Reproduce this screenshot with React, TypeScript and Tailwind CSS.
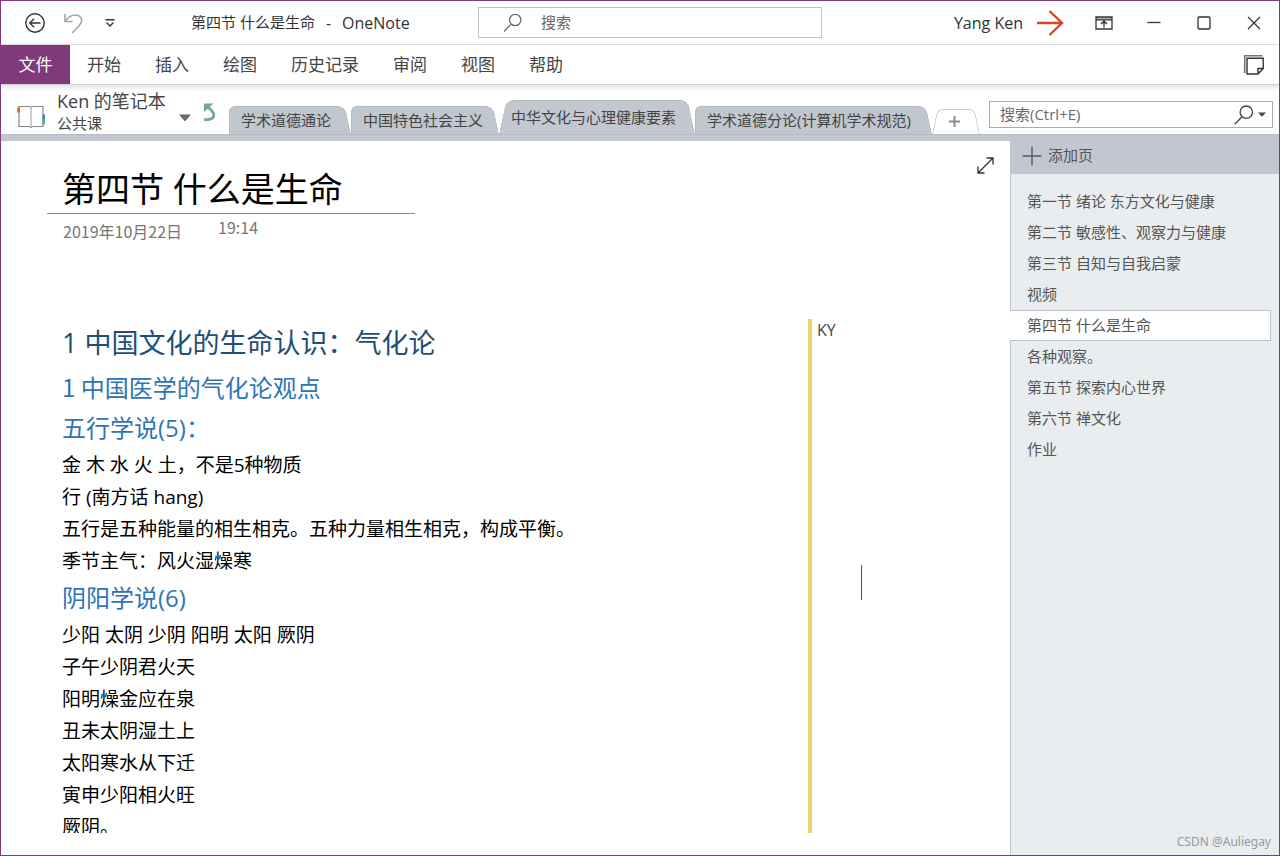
import React from "react";

const menus = ["开始", "插入", "绘图", "历史记录", "审阅", "视图", "帮助"];

const pages = [
  "第一节 绪论 东方文化与健康",
  "第二节 敏感性、观察力与健康",
  "第三节 自知与自我启蒙",
  "视频",
  "第四节 什么是生命",
  "各种观察。",
  "第五节 探索内心世界",
  "第六节 禅文化",
  "作业",
];

const currentPage = "第四节 什么是生命";

function TitleBar() {
  return (
    <header className="flex h-11 shrink-0 items-center border-b border-[#e1e1e1]">
      <div className="flex w-[477px] shrink-0 items-center">
        <button aria-label="返回" className="ml-[23px] flex h-8 w-[22px] items-center justify-center">
          <svg width="22" height="22" viewBox="0 0 22 22" fill="none" stroke="#333" strokeWidth="1.4">
            <circle cx="11" cy="11" r="9.2" />
            <path d="M5.8 11H16.5M10 6.7L5.8 11L10 15.3" />
          </svg>
        </button>
        <button aria-label="撤消" className="ml-4 flex h-8 w-[22px] items-center justify-center">
          <svg width="22" height="22" viewBox="0 0 22 22" fill="none" stroke="#a3a3a3" strokeWidth="1.5">
            <path d="M3 2V9.5H10.5" />
            <path d="M3.3 9.2C6 5.2 9.5 2.8 13.5 2.9C17.5 3 20 5.8 19.6 9.2C19.2 13 14 17 10 21" />
          </svg>
        </button>
        <button aria-label="自定义快速访问工具栏" className="ml-5 flex h-8 w-3 items-center justify-center">
          <svg width="12" height="12" viewBox="0 0 12 12" fill="none" stroke="#333" strokeWidth="1.4">
            <path d="M1.5 2.7H10.5M2.5 5.5L6 9L9.5 5.5" />
          </svg>
        </button>
        <div className="ml-[75px] flex items-center gap-[11px] whitespace-pre text-[#333]">
          <span className="text-[15px]">第四节 什么是生命</span>
          <span>-</span>
          <span>OneNote</span>
        </div>
      </div>
      <label className="flex h-[31px] w-[344px] items-center border border-[#c4c4c4]">
        <svg className="ml-6 shrink-0" width="20" height="20" viewBox="0 0 20 20" fill="none" stroke="#666" strokeWidth="1.2">
          <circle cx="12.2" cy="7" r="5.7" />
          <path d="M8.2 11.2L1 18.5" />
        </svg>
        <input
          type="text"
          aria-label="搜索"
          placeholder="搜索"
          className="ml-[18px] min-w-0 flex-1 text-[15px] outline-none placeholder:text-[#666]"
        />
      </label>
      <div className="ml-auto flex items-center">
        <span className="text-[#333]">Yang Ken</span>
        <svg className="mr-3.5 ml-3.5" width="28" height="26" viewBox="0 0 28 26" fill="none" stroke="#d24726" strokeWidth="2.4">
          <path d="M0 13H26M12.5 1L25 13L12.5 25" />
        </svg>
        <button aria-label="功能区显示选项" className="flex h-10 w-[50px] items-center justify-center">
          <svg width="18" height="14" viewBox="0 0 18 14" fill="none" stroke="#333" strokeWidth="1.3">
            <path d="M1 2.5H17" stroke="#aaa" strokeWidth="2" />
            <path d="M1 1H17V13H1ZM1 3.8H17M9 11.5V5.5M6 8L9 5.2L12 8" />
          </svg>
        </button>
        <button aria-label="最小化" className="flex h-10 w-[50px] items-center justify-center">
          <svg width="14" height="14" viewBox="0 0 14 14" fill="none" stroke="#333" strokeWidth="1.3">
            <path d="M0.5 6.5H13.5" />
          </svg>
        </button>
        <button aria-label="最大化" className="flex h-10 w-[50px] items-center justify-center">
          <svg width="14" height="14" viewBox="0 0 14 14" fill="none" stroke="#333" strokeWidth="1.3">
            <rect x="1" y="1" width="12" height="12" rx="1.2" />
          </svg>
        </button>
        <button aria-label="关闭" className="flex h-10 w-[50px] items-center justify-center">
          <svg width="14" height="14" viewBox="0 0 14 14" fill="none" stroke="#333" strokeWidth="1.3">
            <path d="M1 1L13 13M13 1L1 13" />
          </svg>
        </button>
      </div>
    </header>
  );
}

function Ribbon() {
  return (
    <nav className="z-10 flex h-10 shrink-0 items-center border-b border-[#d2d2d2] bg-white text-[17px] text-[#444] shadow-[0_2px_5px_rgba(0,0,0,0.14)]">
      <button className="h-full w-[69px] bg-[#80397b] text-white">文件</button>
      <div className="ml-[17px] flex gap-[34px]">
        {menus.map((m) => (
          <button key={m}>{m}</button>
        ))}
      </div>
      <button aria-label="便笺" className="mr-3.5 ml-auto">
        <svg width="22" height="22" viewBox="0 0 22 22" fill="none">
          <path d="M1.7 19V1.7H19.5" stroke="#777" strokeWidth="1.6" />
          <path d="M4 4.2H20.2V14.5L15 20H4Z" stroke="#333" strokeWidth="1.4" />
          <path d="M20.2 14.5H15V20" stroke="#333" strokeWidth="1.4" />
        </svg>
      </button>
    </nav>
  );
}

function SectionTab({ label, width }: { label: string; width: string }) {
  return (
    <button className={`relative isolate h-7 pr-4 pl-3 text-left whitespace-nowrap ${width}`}>
      <span className="absolute inset-y-0 right-4 left-0 -z-10 rounded-tl-md border-t border-l border-[#b3bac2] bg-[#c1c7ce]" />
      <span className="absolute inset-y-0 right-0 left-4 -z-10 origin-bottom skew-x-12 rounded-tr-lg border-t border-r border-[#b3bac2] bg-[#c1c7ce]" />
      {label}
    </button>
  );
}

function ActiveTab({ label }: { label: string }) {
  return (
    <button className="relative isolate z-10 h-[34px] min-w-[196px] px-3 text-left whitespace-nowrap">
      <span className="absolute inset-y-0 right-6 left-0 -z-10 origin-bottom -skew-x-12 rounded-tl-lg border-t border-l border-[#b3bac2] bg-[#c3c8d0]" />
      <span className="absolute inset-y-0 right-0 left-6 -z-10 origin-bottom skew-x-12 rounded-tr-lg border-t border-r border-[#b3bac2] bg-[#c3c8d0]" />
      {label}
    </button>
  );
}

function SectionBar() {
  return (
    <div className="flex h-[49px] shrink-0 text-[15px] text-[#444]">
      <div className="flex w-[228px] shrink-0">
        <svg className="mt-5 ml-4 shrink-0" width="28" height="24" viewBox="0 0 28 24" fill="none">
          <path d="M2 1.5H12L14 2.2L16 1.5H26V21.5H16L14 22.3L12 21.5H2Z" stroke="#888" strokeWidth="1.2" />
          <path d="M14 2.5V22" stroke="#bbb" strokeWidth="1.4" />
          <path d="M1.6 2.5V7.5" stroke="#e8562f" strokeWidth="2.6" />
          <path d="M26.8 9.5V14.5" stroke="#3c7fc4" strokeWidth="2.4" />
          <path d="M26.8 14.5V19.5" stroke="#58a88c" strokeWidth="2.4" />
        </svg>
        <div className="mt-1 ml-3 w-[114px] shrink-0 whitespace-nowrap">
          <div className="text-[18px] leading-6">Ken 的笔记本</div>
          <div className="leading-5">公共课</div>
        </div>
        <button aria-label="选择笔记本" className="mt-[29px] ml-2 h-2 w-3">
          <svg width="12" height="8" viewBox="0 0 12 8">
            <path d="M0 0.5H12L6 7.5Z" fill="#6a6a6a" />
          </svg>
        </button>
        <button aria-label="同步" className="mt-[18px] ml-3 h-5 w-3.5">
          <svg width="14" height="20" viewBox="0 0 14 20" fill="none">
            <path d="M1 0.5H10.5L7.5 3.2L4 6.5L1 9Z" fill="#72a995" />
            <path d="M4 3.5C6.5 6 10.8 8 10.8 12C10.8 15.2 7.5 17.2 1.2 16.4" stroke="#72a995" strokeWidth="2.8" />
          </svg>
        </button>
      </div>
      <div className="flex flex-1 items-end">
        <SectionTab label="学术道德通论" width="min-w-[122px]" />
        <SectionTab label="中国特色社会主义" width="min-w-[147px]" />
        <ActiveTab label="中华文化与心理健康要素" />
        <SectionTab label="学术道德分论(计算机学术规范)" width="min-w-[237px]" />
        <button aria-label="新建分区" className="relative isolate flex h-[25px] w-12 items-center justify-center">
          <span className="absolute inset-y-0 right-4 left-0 -z-10 origin-bottom -skew-x-12 rounded-tl-md border-t border-l border-[#c6c6c6] bg-white" />
          <span className="absolute inset-y-0 right-0 left-4 -z-10 origin-bottom skew-x-12 rounded-tr-md border-t border-r border-[#c6c6c6] bg-white" />
          <svg className="mr-1" width="11" height="11" viewBox="0 0 11 11" stroke="#8c8c8c" strokeWidth="2">
            <path d="M5.5 0V11M0 5.5H11" />
          </svg>
        </button>
      </div>
      <div className="mt-4 mr-1.5 flex h-[27px] w-[284px] shrink-0 items-center border border-[#ababab]">
        <input
          type="text"
          aria-label="搜索(Ctrl+E)"
          placeholder="搜索(Ctrl+E)"
          className="ml-2.5 min-w-0 flex-1 outline-none placeholder:text-[#6a6a6a]"
        />
        <button aria-label="搜索" className="flex">
          <svg width="20" height="20" viewBox="0 0 20 20" fill="none" stroke="#444" strokeWidth="1.3">
            <circle cx="12.3" cy="7.2" r="6.2" />
            <path d="M8 11.8L0.8 19.2" />
          </svg>
        </button>
        <button aria-label="搜索范围" className="mr-1.5 ml-1">
          <svg width="8" height="5" viewBox="0 0 8 5">
            <path d="M0 0.5H8L4 4.8Z" fill="#444" />
          </svg>
        </button>
      </div>
    </div>
  );
}

const H3 = ({ children }: { children: React.ReactNode }) => (
  <h4 className="text-2xl leading-[42px] text-[#2e75b5]">{children}</h4>
);

function Note() {
  return (
    <main className="relative flex min-w-0 flex-1 flex-col bg-white text-black">
      <button aria-label="整页视图" className="absolute top-4 right-4">
        <svg width="17" height="17" viewBox="0 0 17 17" fill="none" stroke="#333" strokeWidth="1.3">
          <path d="M1.5 15.5L15.5 1.5M9.5 1H16V7.5M1 9.5V16H7.5" />
        </svg>
      </button>
      <div className="mt-6 ml-[46px] flex">
        <h1 className="min-w-[368px] border-b border-[#8a8a8a] pl-[15px] text-[34px] leading-[48px]">第四节 什么是生命</h1>
      </div>
      <div className="ml-[62px] flex h-[105px] items-start gap-9 font-['Noto_Sans_CJK_SC',sans-serif] text-[#767676]">
        <span className="leading-[34px]">2019年10月22日</span>
        <span className="leading-[26px]">19:14</span>
      </div>
      <div className="mb-[22px] flex min-h-0 flex-1 overflow-hidden pl-[61px]">
        <article className="w-[746px] shrink-0 text-[19px] leading-8">
          <h2 className="text-[27px] leading-[48px] text-[#1e4e79]">1 中国文化的生命认识：气化论</h2>
          <h3 className="font-['Noto_Sans_CJK_SC',sans-serif] text-2xl leading-10 text-[#2e75b5]">1 中国医学的气化论观点</h3>
          <H3>五行学说(5)：</H3>
          <p>金 木 水 火 土，不是5种物质</p>
          <p>行 (南方话 hang)</p>
          <p>五行是五种能量的相生相克。五种力量相生相克，构成平衡。</p>
          <p>季节主气：风火湿燥寒</p>
          <H3>阴阳学说(6)</H3>
          <p>少阳 太阴 少阴 阳明 太阳 厥阴</p>
          <p>子午少阴君火天</p>
          <p>阳明燥金应在泉</p>
          <p>丑未太阴湿土上</p>
          <p>太阳寒水从下迁</p>
          <p>寅申少阳相火旺</p>
          <p>厥阴。</p>
        </article>
        <aside className="flex-1 border-l-4 border-[#f2d16f] pl-[5px] text-base leading-[22px] text-[#444]">
          KY
          <div className="mt-56 ml-11 h-[35px] w-px bg-[#555]" />
        </aside>
      </div>
    </main>
  );
}

function PageList() {
  return (
    <aside className="flex w-[269px] shrink-0 flex-col text-[15px] text-[#555]">
      <button className="flex h-[33px] shrink-0 items-center gap-1.5 bg-[#c2c7cf] pb-1 pl-3">
        <svg width="20" height="20" viewBox="0 0 20 20" stroke="#555" strokeWidth="1.3">
          <path d="M10 0.5V19.5M0.5 10H19.5" />
        </svg>
        添加页
      </button>
      <ul className="flex-1 border-l border-[#bcc3ca] bg-[#e9edf0] pt-3">
        {pages.map((p) => (
          <li
            key={p}
            className={
              p === currentPage
                ? "mr-2 -ml-px h-[31px] border-y border-r border-[#bcc3ca] bg-white pl-px leading-[29px]"
                : "h-[31px] leading-[31px]"
            }
          >
            <button className="w-full pl-4 text-left whitespace-nowrap">{p}</button>
          </li>
        ))}
      </ul>
    </aside>
  );
}

export default function App() {
  return (
    <div className="relative flex h-screen flex-col overflow-hidden border border-[#80397b] bg-white font-['Open_Sans','Noto_Sans_CJK_SC',sans-serif] text-base">
      <TitleBar />
      <Ribbon />
      <SectionBar />
      <div className="h-[7px] shrink-0 border-t border-[#b6bcc5] bg-[#c2c7cf]" />
      <div className="flex min-h-0 flex-1">
        <Note />
        <PageList />
      </div>
      <span className="absolute right-2 bottom-1 font-['Noto_Sans',sans-serif] text-xs leading-[18px] text-[#999]">
        CSDN @Auliegay
      </span>
    </div>
  );
}
